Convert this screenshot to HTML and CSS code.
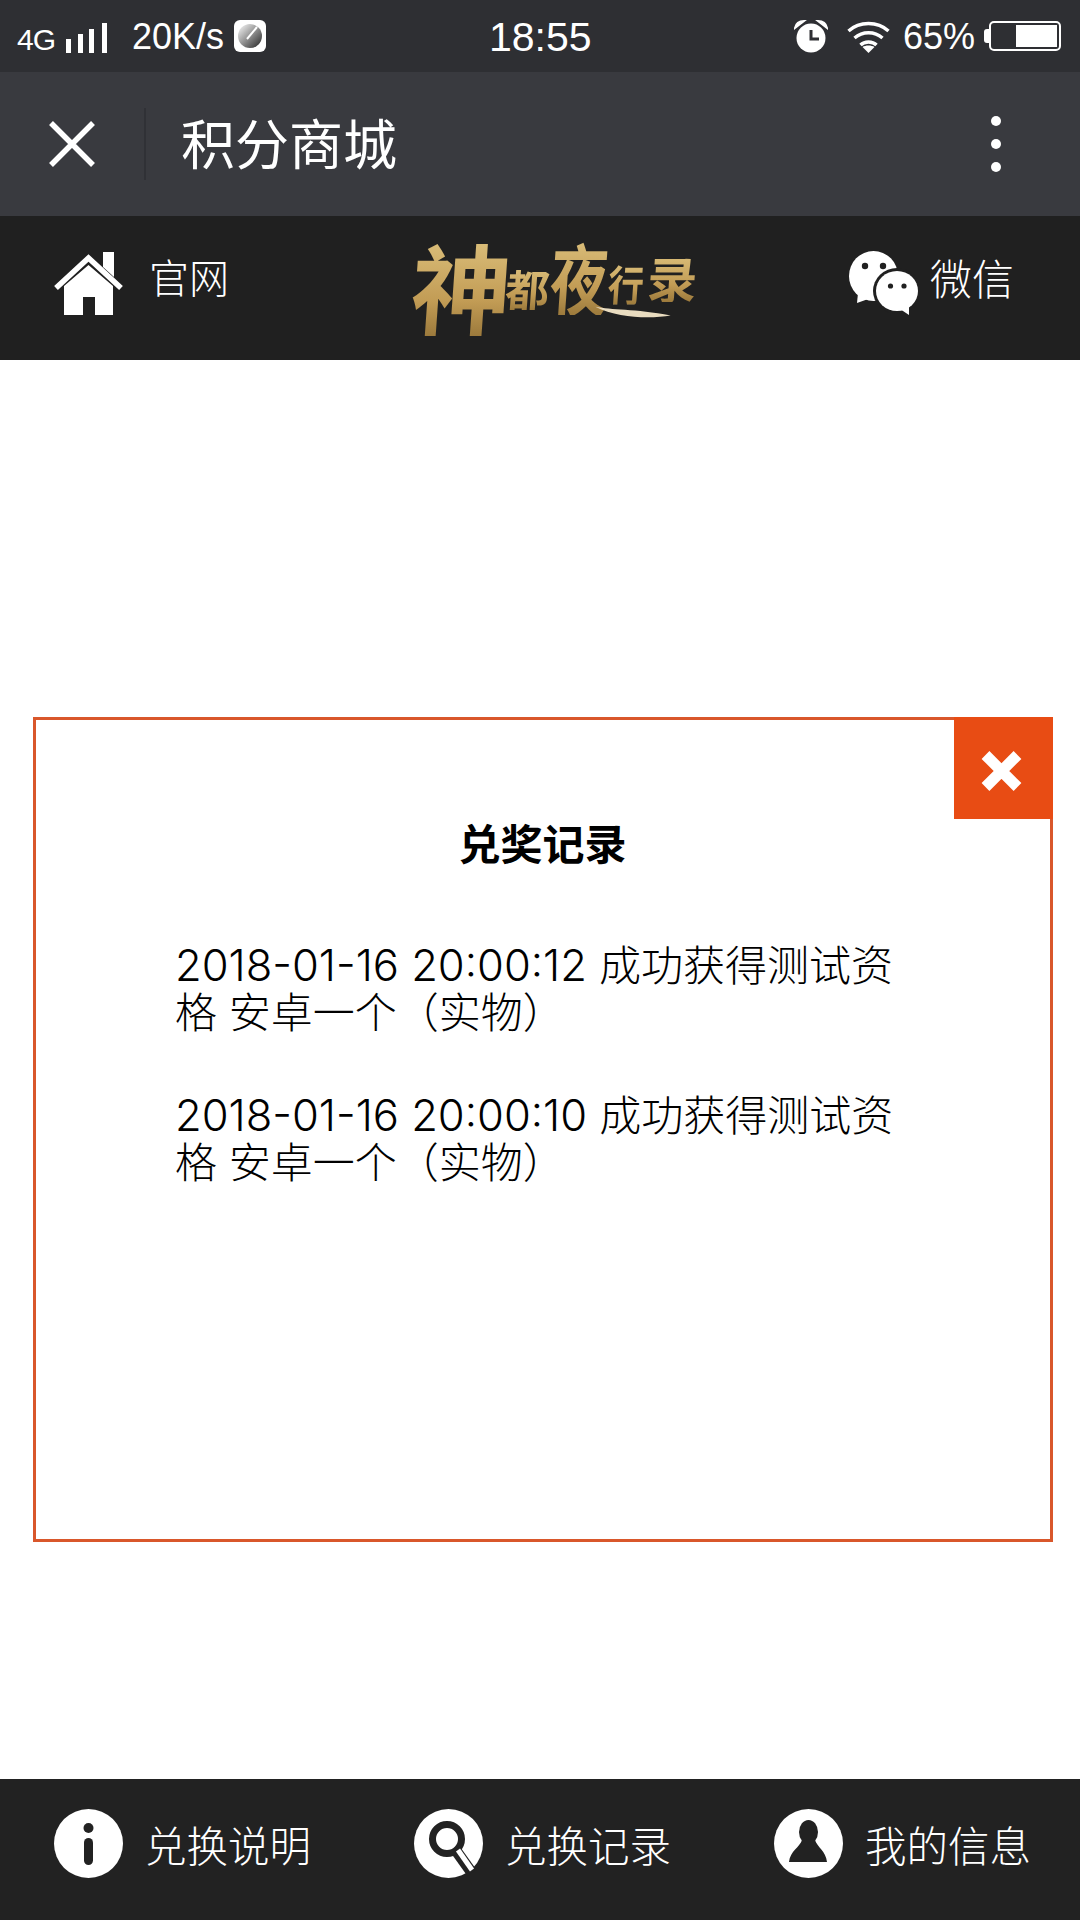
FILE: index.html
```html
<!DOCTYPE html>
<html lang="zh">
<head>
<meta charset="utf-8">
<title>积分商城</title>
<link rel="stylesheet" href="styles.css">
</head>
<body>
<div class="status">
    <span class="net">4G</span>
    <svg class="signal" width="42" height="30" viewBox="0 0 42 30"><path fill="#fff" d="M1 16h5v14H1zM13 11h5v19h-5zM24 6h5v24h-5zM37 0h5v30h-5z"/></svg>
    <span class="speed">20K/s</span>
    <svg class="gauge" width="32" height="32" viewBox="0 0 32 32">
        <defs><linearGradient id="dial" x1="0" y1="0" x2="1" y2="1"><stop offset="0" stop-color="#fff"/><stop offset="1" stop-color="#222"/></linearGradient></defs>
        <rect width="32" height="32" rx="6" fill="#fff"/>
        <circle cx="16" cy="16" r="12" fill="url(#dial)"/>
        <path d="M13 19L23 7" stroke="#fff" stroke-width="2"/>
    </svg>
    <span class="time">18:55</span>
    <svg class="alarm" width="34" height="33" viewBox="0 0 34 33">
        <circle cx="17" cy="18" r="14.5" fill="#fff"/>
        <path fill="#fff" d="M1 8C2 3 6 1 10 1L1 8zM33 8C32 3 28 1 24 1L33 8z" stroke="#fff" stroke-width="2"/>
        <path d="M17 10v9h8" fill="none" stroke="#2e2f33" stroke-width="3"/>
    </svg>
    <svg class="wifi" width="45" height="33" viewBox="0 0 44 33" fill="none" stroke="#fff" stroke-width="3.4">
        <path d="M2 11C13 1 31 1 42 11M8 18C16 11 28 11 36 18M14 25C18 21 26 21 30 25"/>
        <path d="M22 33L16 27C19 25 25 25 28 27z" fill="#fff" stroke="none"/>
    </svg>
    <span class="pct">65%</span>
    <span class="batt-cap"></span>
    <span class="batt"><span class="batt-fill"></span></span>
</div>

<div class="nav">
    <svg class="nav-close" width="46" height="46" viewBox="0 0 46 46"><path d="M2 2L44 44M44 2L2 44" stroke="#fff" stroke-width="5.5"/></svg>
    <span class="nav-line"></span>
    <span class="nav-title">积分商城</span>
    <span class="dots"><i></i><i></i><i></i></span>
</div>

<div class="head">
    <a class="head-link">
        <svg width="69" height="63" viewBox="0 0 69 63">
            <path fill="#fff" d="M10 34L34.500 13L59 34V63H41V45H29V63H10z"/>
            <path fill="none" stroke="#fff" stroke-width="5.500" d="M2 36L34.500 6L67 36"/>
            <path fill="#fff" d="M49 0h11v25l-11-10z"/>
        </svg>
        <span class="head-text home-text">官网</span>
    </a>
    <div class="logo">
        <span class="l1">神</span><span class="l2">都</span><span class="l3">夜</span><span class="l4">行</span><span class="l5">录</span>
        <svg class="swash" width="76" height="14" viewBox="0 0 96 16" preserveAspectRatio="none"><path d="M0 2C20 6 50 4 96 12C70 16 30 15 0 2z" fill="#e9dcc0"/></svg>
    </div>
    <a class="head-link wx">
        <svg width="69" height="64" viewBox="0 0 69 64">
            <ellipse cx="24.500" cy="25" rx="24.500" ry="25" fill="#fff"/>
            <path fill="#fff" d="M9 42L8 52L22 47z"/>
            <circle cx="16" cy="15" r="3.200" fill="#202020"/><circle cx="34" cy="15" r="3.200" fill="#202020"/>
            <ellipse cx="48" cy="40" rx="24" ry="23" fill="#202020"/>
            <ellipse cx="48" cy="40" rx="21" ry="20" fill="#fff"/>
            <path fill="#fff" d="M51 58L60 64L60 54z"/>
            <circle cx="41.500" cy="35" r="2.600" fill="#202020"/><circle cx="55" cy="35" r="2.600" fill="#202020"/>
        </svg>
        <span class="head-text wx-text">微信</span>
    </a>
</div>

<div class="main">
    <div class="dialog">
        <span class="dialog-close">
            <svg width="43" height="42" viewBox="0 0 42 42"><path d="M5 5L37 37M37 5L5 37" stroke="#fff" stroke-width="11"/></svg>
        </span>
        <h2 class="dialog-title">兑奖记录</h2>
        <p class="rec"><span class="rec-time">2018-01-16 20:00:12 </span><span>成功获得测试资</span><span>格 安卓一个（实物）</span></p>
        <p class="rec"><span class="rec-time">2018-01-16 20:00:10 </span><span>成功获得测试资</span><span>格 安卓一个（实物）</span></p>
    </div>
</div>

<div class="foot">
    <a class="foot-item">
        <svg width="69" height="69" viewBox="0 0 69 69">
            <circle cx="34.500" cy="34.500" r="34.500" fill="#fff"/>
            <circle cx="34.500" cy="19" r="5" fill="#222"/>
            <rect x="30" y="29" width="9" height="27" rx="4.500" fill="#222"/>
        </svg>
        <span>兑换说明</span>
    </a>
    <a class="foot-item">
        <svg width="69" height="69" viewBox="0 0 69 69">
            <circle cx="34.500" cy="34.500" r="34.500" fill="#fff"/>
            <circle cx="33" cy="30" r="14.500" fill="none" stroke="#222" stroke-width="7"/>
            <path d="M43 43L58 64" stroke="#222" stroke-width="11"/>
            <path d="M44 41L58 61" stroke="#fff" stroke-width="5"/>
        </svg>
        <span>兑换记录</span>
    </a>
    <a class="foot-item">
        <svg width="69" height="69" viewBox="0 0 69 69">
            <circle cx="34.500" cy="34.500" r="34.500" fill="#fff"/>
            <ellipse cx="34.500" cy="23" rx="9.500" ry="12" fill="#222"/>
            <path fill="#222" d="M28 31H41C43 38 52 42 53 53H15C16 42 26 38 28 31z"/>
        </svg>
        <span>我的信息</span>
    </a>
</div>
</body>
</html>
```

FILE: styles.css
```css
*{
    box-sizing:border-box;
}

body{
    margin:0;
    width:1080px;
    height:1920px;
    display:flex;
    flex-direction:column;
    background-color:white;
    color:white;
    font-family:"Noto Sans CJK SC","Noto Sans",sans-serif;
}

/* status bar */
.status{
    height:72px;
    display:flex;
    align-items:center;
    padding-left:17px;
    background-color:#2e2f33;
    font-family:"Liberation Sans","Noto Sans CJK SC",sans-serif;
}
.net{
    width:48px;
    font-size:30px;
    letter-spacing:-1px;
    padding-top:7px;
}
.signal{
    margin-top:4px;
}
.speed{
    margin-left:25px;
    padding-top:2px;
    width:92px;
    font-size:36px;
}
.gauge{
    margin-left:10px;
}
.time{
    margin-left:223px;
    padding-top:2px;
    width:305px;
    font-size:41px;
}
.alarm{
    margin-top:0;
}
.wifi{
    margin-left:18px;
}
.pct{
    margin-left:12px;
    padding-top:2px;
    width:71px;
    font-size:36px;
}
.batt-cap{
    width:5px;
    height:14px;
    margin-left:10px;
    background-color:white;
    border-radius:3px 0 0 3px;
}
.batt{
    width:72px;
    height:30px;
    padding:2px;
    display:flex;
    justify-content:flex-end;
    border:2px solid white;
    border-radius:5px;
}
.batt-fill{
    width:41px;
    background-color:white;
}

/* title bar */
.nav{
    height:144px;
    display:flex;
    align-items:center;
    padding-left:49px;
    background-color:#393a3f;
}
.nav-line{
    width:2px;
    height:72px;
    margin-left:49px;
    background-color:#303136;
}
.nav-title{
    margin-left:35px;
    margin-bottom:6px;
    font-size:54px;
}
.dots{
    margin-left:auto;
    margin-right:79px;
    display:flex;
    flex-direction:column;
    gap:13px;
}
.dots i{
    width:10px;
    height:10px;
    border-radius:50%;
    background-color:white;
}

/* game header */
.head{
    height:144px;
    display:flex;
    align-items:center;
    padding:0 0 10px 54px;
    background-color:#202020;
}
.head-link{
    display:flex;
    align-items:center;
}
.head-text{
    margin-bottom:14px;
    font-weight:300;
}
.home-text{
    margin-left:26px;
    font-size:40px;
}
.wx{
    margin-left:auto;
    margin-right:66px;
}
.wx-text{
    margin-left:12px;
    font-size:42px;
}
.logo{
    position:relative;
    margin-left:183px;
    width:280px;
    height:112px;
    display:flex;
    align-items:center;
    font-weight:700;
    white-space:nowrap;
    transform:skewX(-4deg);
}
.logo span{
    line-height:1;
    background:linear-gradient(180deg,#dcc07c,#c29c55 65%,#9c7a3c);
    -webkit-background-clip:text;
    background-clip:text;
    color:transparent;
}
.l1{
    font-size:100px;
    margin-top:6px;
}
.l2{
    font-size:44px;
    margin-top:10px;
    margin-left:-6px;
}
.l3{
    font-size:58px;
    margin-top:-14px;
    transform:scaleY(1.35);
}
.l4{
    font-size:36px;
    margin-top:0;
    transform:scaleY(1.2);
}
.l5{
    font-size:50px;
    margin-left:3px;
    margin-top:-12px;
}
.swash{
    position:absolute;
    left:185px;
    top:78px;
}

/* record dialog */
.main{
    flex:1;
    padding:357px 27px 0 33px;
}
.dialog{
    position:relative;
    height:825px;
    padding:0 140px 0 139px;
    border:3px solid #d9572b;
}
.dialog-close{
    position:absolute;
    top:-3px;
    right:-3px;
    width:99px;
    height:102px;
    display:flex;
    align-items:center;
    justify-content:center;
    padding:6px 4px 0 0;
    background-color:#e84c14;
}
.dialog-title{
    margin:92px 0 70px;
    color:black;
    font-size:42px;
    line-height:60px;
    font-weight:700;
    text-align:center;
}
.rec{
    margin:0 0 56px;
    color:black;
    font-family:"Inter","Noto Sans CJK SC",sans-serif;
    font-size:42px;
    line-height:47px;
    font-weight:300;
}
.rec-time{
    font-size:43.5px;
}

/* bottom bar */
.foot{
    height:141px;
    display:grid;
    grid-template-columns:repeat(3,360px);
    align-items:center;
    padding:0 0 12px 54px;
    background-color:#222;
}
.foot-item{
    display:flex;
    align-items:center;
    gap:22px;
    font-size:41.5px;
    font-weight:300;
}
```
